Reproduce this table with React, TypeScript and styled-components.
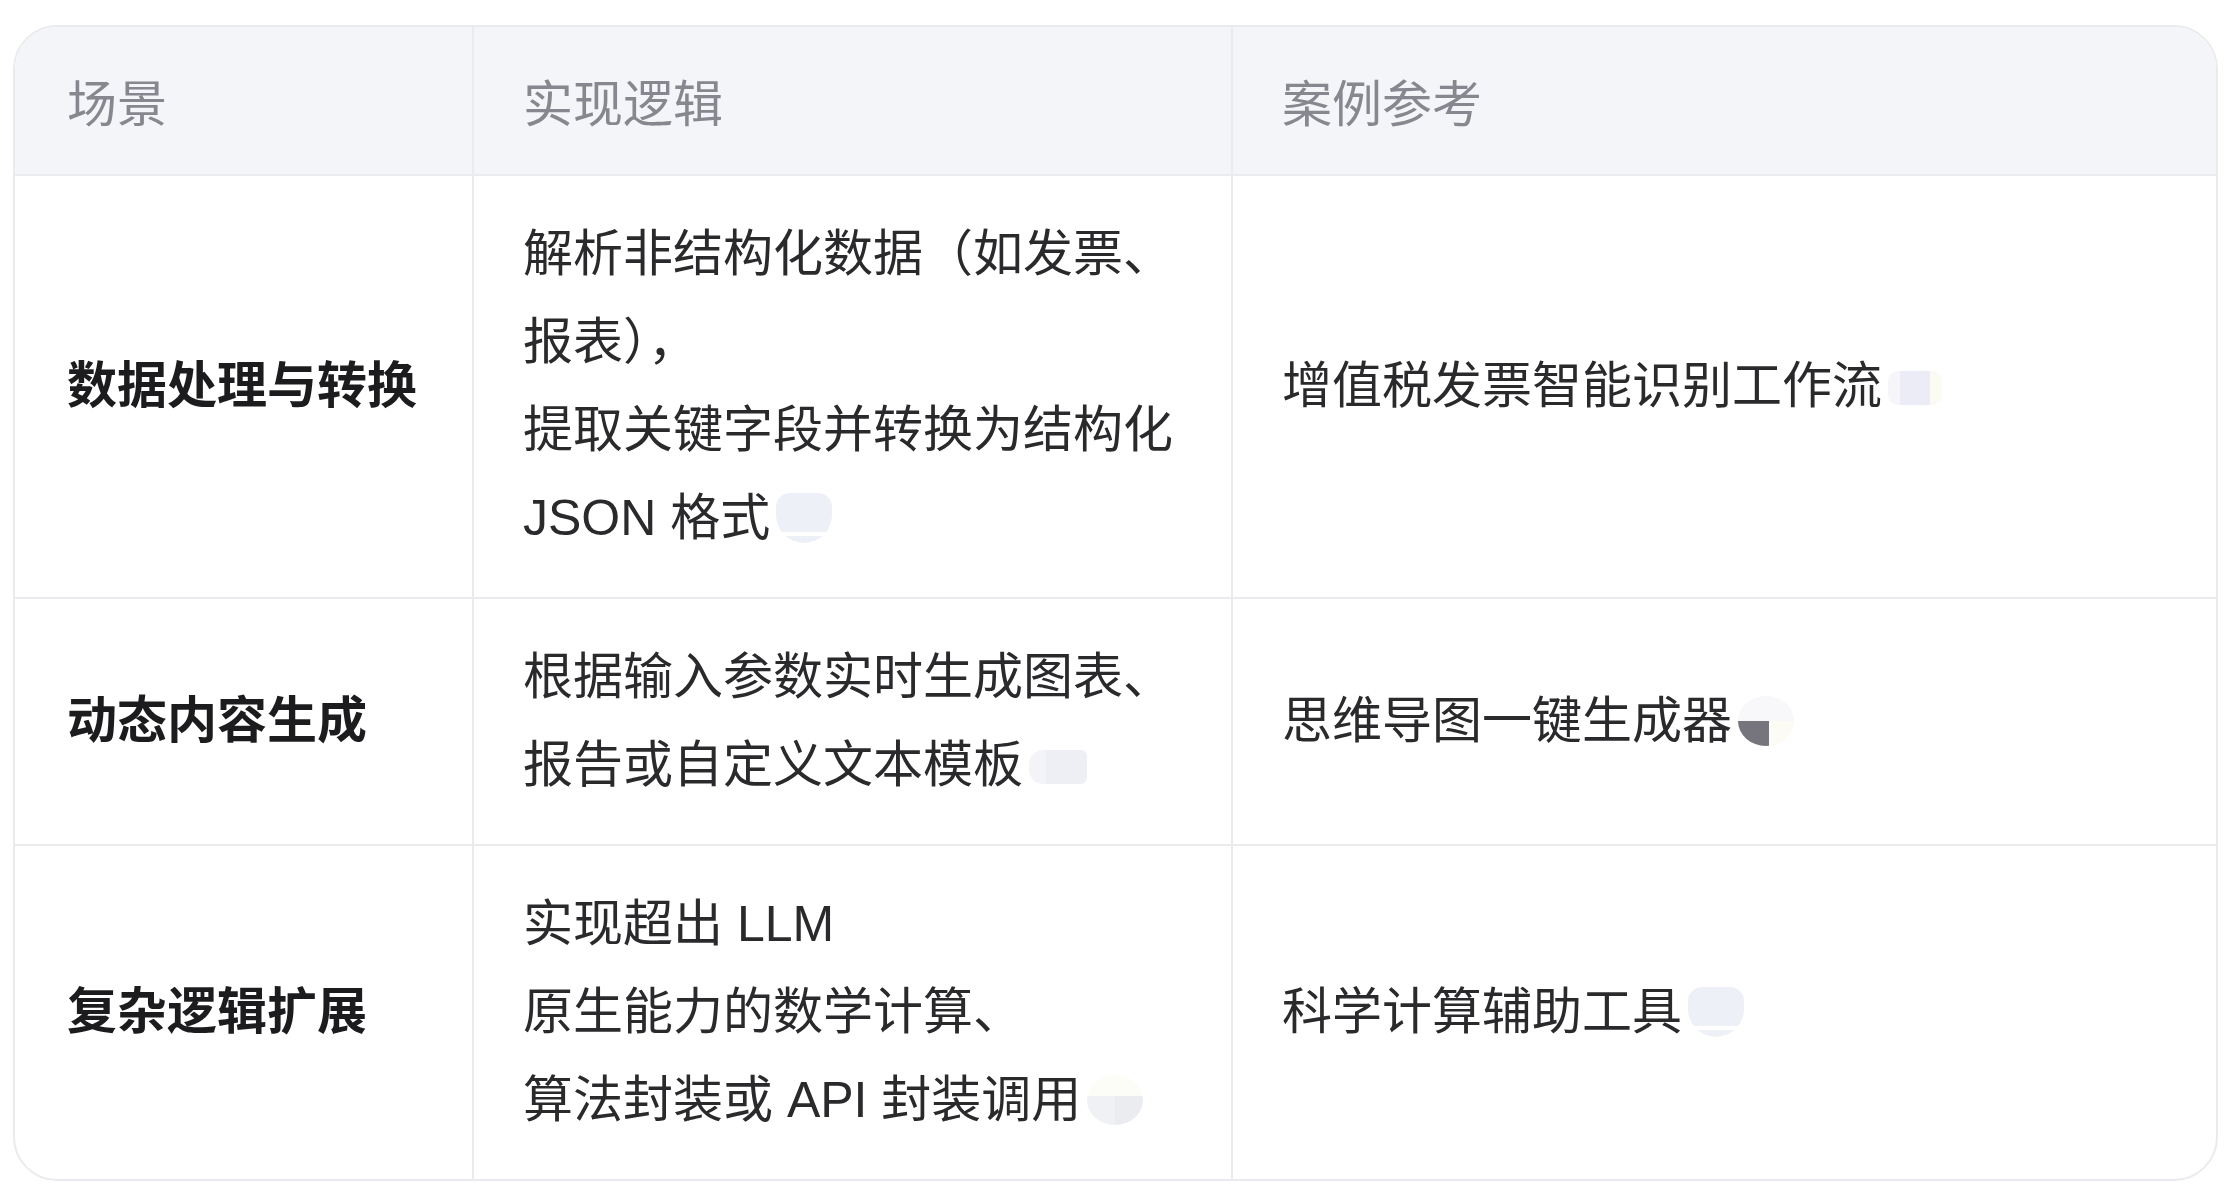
import styled, { createGlobalStyle } from "styled-components";

type BadgeShape = "pill" | "cup" | "bowl" | "quarter" | "flat";

type Row = {
  scene: string;
  logic: string[];
  logicBadge: BadgeShape;
  example: string;
  exampleBadge: BadgeShape;
};

const rows: Row[] = [
  {
    scene: "数据处理与转换",
    logic: ["解析非结构化数据（如发票、", "报表），", "提取关键字段并转换为结构化", "JSON 格式"],
    logicBadge: "cup",
    example: "增值税发票智能识别工作流",
    exampleBadge: "pill"
  },
  {
    scene: "动态内容生成",
    logic: ["根据输入参数实时生成图表、", "报告或自定义文本模板"],
    logicBadge: "flat",
    example: "思维导图一键生成器",
    exampleBadge: "quarter"
  },
  {
    scene: "复杂逻辑扩展",
    logic: ["实现超出 LLM", "原生能力的数学计算、", "算法封装或 API 封装调用"],
    logicBadge: "bowl",
    example: "科学计算辅助工具",
    exampleBadge: "cup"
  }
];

const GlobalStyle = createGlobalStyle`
  *, *::before, *::after {
    box-sizing: border-box;
  }
  body {
    margin: 0;
    background: #ffffff;
    font-family: "Liberation Sans", "Noto Sans CJK SC", sans-serif;
  }
`;

const TableWrap = styled.div`
  width: 2205px;
  margin: 25px 0 0 13px;
  border: 2px solid #eaebef;
  border-radius: 44px;
  overflow: hidden;
`;

const Table = styled.table`
  width: 100%;
  border-collapse: separate;
  border-spacing: 0;
  table-layout: fixed;
`;

const HeadCell = styled.th<{ $width?: number }>`
  width: ${(p) => (p.$width ? `${p.$width}px` : "auto")};
  padding: 34px 52px 25px 49px;
  background: #f4f5f8;
  border-bottom: 2px solid #eaebef;
  border-left: 2px solid #eaebef;
  text-align: left;
  font-size: 50px;
  line-height: 88px;
  font-weight: 400;
  color: #87878f;
  &:first-child {
    border-left: none;
    padding-left: 52px;
  }
`;

const Cell = styled.td<{ $bold?: boolean }>`
  padding: 34px 52px 35px 49px;
  border-left: 2px solid #eaebef;
  vertical-align: middle;
  font-size: 50px;
  line-height: 88px;
  color: ${(p) => (p.$bold ? "#1c1c1e" : "#2a2a2d")};
  font-weight: ${(p) => (p.$bold ? 700 : 400)};
  &:first-child {
    border-left: none;
    padding-left: 52px;
  }
`;

const BodyRow = styled.tr`
  & + & > td {
    border-top: 2px solid #eaebef;
  }
`;

const Line = styled.div`
  white-space: nowrap;
`;

// the half-loaded citation markers that trail each cell
const Badge = styled.span<{ $shape: BadgeShape }>`
  display: inline-block;
  vertical-align: ${(p) => (p.$shape === "pill" || p.$shape === "flat" ? "-2px" : "-8px")};
  margin-left: 6px;
  width: ${(p) => (p.$shape === "pill" ? "54px" : p.$shape === "flat" ? "58px" : "56px")};
  height: ${(p) => (p.$shape === "pill" || p.$shape === "flat" ? "34px" : "50px")};
  border-radius: ${(p) =>
    p.$shape === "pill"
      ? "10px"
      : p.$shape === "flat"
        ? "14px 6px 6px 14px"
        : p.$shape === "cup"
          ? "14px 14px 28px 28px"
          : "50%"};
  background: ${(p) => {
    switch (p.$shape) {
      case "pill":
        return "linear-gradient(90deg, #f5f5fa 0 22%, #ececf6 22% 78%, #fbfbf3 78%)";
      case "flat":
        return "linear-gradient(90deg, #f4f4f8 0 30%, #eeeef5 30%)";
      case "cup":
        return "linear-gradient(180deg, #eef0f8 0 78%, #ffffff 78% 86%, #eef0f8 86%)";
      case "bowl":
        return "linear-gradient(180deg, #fdfdf8 0 42%, transparent 42%), linear-gradient(90deg, #f0f1f5 0 50%, #eaecf0 50%)";
      case "quarter":
        return "linear-gradient(90deg, #76757e 0 56%, #fcfcf4 56%) bottom / 100% 50% no-repeat, #f8f8fb";
    }
  }};
`;

const App = () => {
  return (
    <>
      <GlobalStyle />
      <TableWrap>
        <Table>
          <thead>
            <tr>
              <HeadCell $width={457}>场景</HeadCell>
              <HeadCell $width={759}>实现逻辑</HeadCell>
              <HeadCell>案例参考</HeadCell>
            </tr>
          </thead>
          <tbody>
            {rows.map((row) => (
              <BodyRow key={row.scene}>
                <Cell $bold>{row.scene}</Cell>
                <Cell>
                  {row.logic.map((line, i) => (
                    <Line key={line}>
                      {line}
                      {i === row.logic.length - 1 && <Badge $shape={row.logicBadge} />}
                    </Line>
                  ))}
                </Cell>
                <Cell>
                  <Line>
                    {row.example}
                    <Badge $shape={row.exampleBadge} />
                  </Line>
                </Cell>
              </BodyRow>
            ))}
          </tbody>
        </Table>
      </TableWrap>
    </>
  );
};

export default App;
